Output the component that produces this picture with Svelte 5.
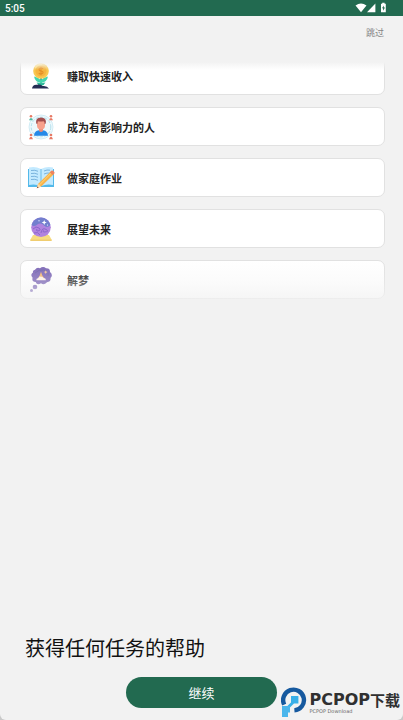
<script>
  const tasks = [
    { icon: 'money', label: '赚取快速收入' },
    { icon: 'influencer', label: '成为有影响力的人' },
    { icon: 'homework', label: '做家庭作业' },
    { icon: 'crystal', label: '展望未来' },
    { icon: 'dream', label: '解梦' }
  ];
</script>

<div class="screen">
  <header class="status">
    <span>5:05</span>
    <svg width="34" height="12" viewBox="0 0 34 12" fill="#fff" aria-hidden="true">
      <path d="M0.5 3.6Q6 -0.6 11.5 3.6L6 10.2Z" />
      <path d="M20.4 1.4V10.2H12Z" />
      <path fill-rule="evenodd" d="M26 1.8h1.2V.8h2.4v1h1.2v8.4H26ZM28.8 3.4 27 6.3h1.1v2.4L30 5.6h-1.2Z" />
    </svg>
  </header>

  <main>
    <div class="top"><button class="skip" type="button">跳过</button></div>

    <div class="viewport">
      <ul>
        {#each tasks as task}
          <li>
            <svg class="icon" width="28" height="28" viewBox="0 0 28 28" aria-hidden="true">
              {#if task.icon === 'money'}
                <path d="M14 16v9" stroke="#1aa58a" stroke-width="1.6" />
                <path d="M14 21Q8 20 7 14.5Q12 15.5 14 18.5Q16 15.5 21 14.5Q20 20 14 21Z" fill="#45d6ae" />
                <path d="M14 23.8Q10.5 23 9.6 20.4Q13 20.3 14 22Q15 20.3 18.4 20.4Q17.5 23 14 23.8Z" fill="#28b998" />
                <path d="M5 26.6Q5.5 22.4 10 22.8Q13 22 15.5 24Q20 23.4 22 26.6Z" fill="#242d54" />
                <circle cx="14" cy="9" r="7.8" fill="#f8c851" />
                <circle cx="14" cy="9" r="5.6" fill="#f5b53f" />
                <path d="M8.2 6.2A6.6 6.6 0 0 1 15 2.5" fill="none" stroke="#ffdc75" stroke-width="1.6" />
                <path d="M16.2 6.7Q14 5.2 12.3 6.7Q11.5 8.5 14 9Q16.8 9.5 15.8 11.2Q14 12.8 11.8 11.2M14 4.8v8.4" fill="none" stroke="#e58f27" stroke-width="1.1" />
              {:else if task.icon === 'influencer'}
                <circle cx="14" cy="14" r="12" fill="#edf8fc" stroke="#c9e9f2" stroke-width=".8" />
                <circle cx="14" cy="14" r="9.8" fill="none" stroke="#a5d9e9" stroke-width=".8" stroke-dasharray="3 1.5" />
                <g fill="#e77964">
                  <circle cx="4" cy="3.2" r="1.3" /><circle cx="24" cy="3.2" r="1.3" />
                  <circle cx="4" cy="22" r="1.3" /><circle cx="24" cy="22" r="1.3" />
                  <path d="M22 7.2Q24 2.6 26 7.2ZM2 26.2Q4 21.4 6 26.2ZM22 26.2Q24 21.4 26 26.2Z" />
                </g>
                <path d="M2 7.2Q4 2.6 6 7.2Z" fill="#50b9a0" />
                <path d="M7 22.7Q7.2 18 12 17.3H16Q20.8 18 21 22.7Z" fill="#2389e8" />
                <path d="M12 14h4v4q-2 2-4 0Z" fill="#e98b79" />
                <rect x="10" y="6.5" width="8" height="10" rx="4" fill="#f7a18d" />
                <path d="M9.2 10.5Q8.2 4.4 14 4.4T18.8 10.5L17.6 11Q17.7 8.8 16.6 8.2Q13 9 10.9 8.2L10.3 11Z" fill="#a34e4e" />
              {:else if task.icon === 'homework'}
                <path d="M1 5h26v18H1Z" fill="#53b9ea" />
                <path d="M2 3.5Q8 1.8 14 5Q20 1.8 26 3.5V21Q20 19.6 14 22Q8 19.6 2 21Z" fill="#c3eaff" />
                <path d="M14 5v17" stroke="#6dbbe6" />
                <path d="M4 6.5q4-.8 7 .8M4 9.5q4-.8 7 .8M4 12.5q4-.8 7 .8M4 15.5q4-.8 7 .8M17 7q3-1.5 6-.8M17 10q3-1.5 6-.8" fill="none" stroke="#71add9" stroke-width=".9" />
                <path d="M23.7 7.5 26.8 10.2 14.2 22.6 9.8 24.3 11 20Z" fill="#f8b34b" />
                <path d="M24.8 8.5 12.4 21" stroke="#ffd979" stroke-width="1" />
                <path d="M9.8 24.3 11 20 14.2 22.6Z" fill="#ffdcae" />
                <path d="M9.8 24.3 10.4 22.4 11.7 23.6Z" fill="#744946" />
                <path d="M22.7 8.5 24.3 6.8Q25.2 6 26.1 6.8L27.3 8Q28 9 27.1 9.8L25.8 11.1Z" fill="#ef835f" />
              {:else if task.icon === 'crystal'}
                <path d="M6 20h16l2.5 4.5V26h-21v-1.5Z" fill="#f8dc80" />
                <path d="M3.5 24.5h21V26h-21Z" fill="#f0cd70" />
                <circle cx="14" cy="12.3" r="9.8" fill="#b183df" />
                <path d="M4.5 10A9.8 9.8 0 0 1 23.5 10Q20 13.5 17 10.5Q14 7 10 9.7Q7 12 4.5 10Z" fill="#737fce" />
                <path d="M6 14Q9 10.5 12 13T10 16Q9 15 10 14M14 18Q15 12 19 14.4T17 17Q15.5 17 16.4 15.3M7 18Q11 16.3 13 20" fill="none" stroke="#8c66cb" stroke-width="1" />
                <path d="m17.2 5 .7 1.8 1.8.7-1.8.7-.7 1.8-.7-1.8-1.8-.7 1.8-.7Z" fill="#fff" />
                <circle cx="12" cy="5.8" r=".7" fill="#dce4ff" /><circle cx="20.5" cy="10" r=".6" fill="#fff" />
              {:else}
                <path d="M8 3.8Q10 .7 13 2.3Q16-.2 19 2.2Q23.2 2 23 6Q26.5 9 23.5 12Q24 16 20 16.2Q17 19.5 14 17.3Q10 19.8 8.7 16Q4.5 16 5.6 11.8Q2.8 8.5 6 6.5Q5.4 4.5 8 3.8Z" fill="#7862b4" />
                <path d="M8 7Q12 3 17 4T21 10" fill="none" stroke="#6a5fa6" />
                <path d="m14 5.7 1.4 4 2.4 3H11l1.6-3Z" fill="#f5b56c" />
                <path d="M9.3 14.3Q9 12.2 11.4 12Q12 10 14 10.8Q15.6 10.2 16.4 12Q19 12 18.8 14.3Z" fill="#fff2ea" />
                <path d="m18.7 4.3.6 1.3 1.4.5-1.4.6-.6 1.3-.6-1.3-1.3-.6 1.3-.5Z" fill="#f4c394" />
                <circle cx="8" cy="21" r="2.3" fill="#7862b4" />
                <circle cx="4.5" cy="24.6" r="1.5" fill="#7862b4" />
              {/if}
            </svg>
            <span>{task.label}</span>
          </li>
        {/each}
      </ul>
    </div>

    <h1>获得任何任务的帮助</h1>
    <button class="continue" type="button">继续</button>
  </main>

  <div class="brand">
    <svg width="27" height="31" viewBox="0 0 27 31" aria-hidden="true">
      <path d="M3.2 17.6A10.4 10.4 0 1 1 13.4 23.4" fill="none" stroke="#16599f" stroke-width="4.4" />
      <path d="M10 9h7.4v7.4H13L8.4 21H6.6v-2.2L10 15.4Z" fill="#38afe8" />
      <path d="M1 19h8v6.4H7V30H1Z" fill="#4bb6ec" />
    </svg>
    <div class="words">
      <div class="name"><span>PCPOP</span><span class="cn">下载</span></div>
      <small>PCPOP Download</small>
    </div>
  </div>
</div>

<style>
  :global(body) {
    margin: 0;
    background: #c9c9c9;
  }
  .screen {
    position: relative;
    display: flex;
    flex-direction: column;
    min-height: 100vh;
    font-family: Roboto, "Noto Sans CJK SC", sans-serif;
    color: #111;
  }
  .status {
    display: flex;
    align-items: center;
    justify-content: space-between;
    height: 16px;
    padding: 0 14px 0 5px;
    background: #226a50;
    color: #fff;
    font-size: 10px;
    font-weight: 500;
  }
  main {
    flex: 1;
    display: flex;
    flex-direction: column;
    padding-bottom: 12px;
    background: #f2f2f2;
    border-radius: 0 0 6px 6px;
  }
  button {
    border: 0;
    font-family: inherit;
    cursor: pointer;
  }
  .top {
    display: flex;
    justify-content: flex-end;
    height: 46px;
    padding: 8px 19px 0;
    box-sizing: border-box;
  }
  .skip {
    height: 18px;
    padding: 0;
    background: none;
    color: #858585;
    font-size: 9px;
    line-height: 18px;
  }
  .viewport {
    position: relative;
    height: 238px;
    padding: 0 18px 0 20px;
    overflow: hidden;
  }
  .viewport::before,
  .viewport::after {
    content: "";
    position: absolute;
    left: 0;
    right: 0;
    z-index: 1;
  }
  .viewport::before {
    top: 0;
    height: 8px;
    background: linear-gradient(#f2f2f2, #f2f2f200);
  }
  .viewport::after {
    bottom: 0;
    height: 40px;
    background: linear-gradient(#f2f2f200, #f2f2f240 50%, #f2f2f2c0);
  }
  ul {
    display: flex;
    flex-direction: column;
    gap: 12px;
    margin: -6px 0 0;
    padding: 0;
    list-style: none;
  }
  li {
    display: flex;
    align-items: center;
    gap: 12px;
    height: 39px;
    padding: 0 6px;
    box-sizing: border-box;
    border: 1px solid #e1e1e1;
    border-radius: 7px;
    background: #fff;
    color: #222;
    font-size: 11px;
    font-weight: 700;
  }
  h1 {
    margin: auto 25px 13px;
    font-size: 20px;
    font-weight: 400;
    line-height: 30px;
  }
  .continue {
    align-self: center;
    width: 151px;
    height: 31px;
    padding: 0;
    border-radius: 16px;
    background: #226a50;
    color: #fff;
    font-size: 13px;
  }
  .brand {
    position: absolute;
    right: 3px;
    bottom: 2px;
    display: flex;
    align-items: center;
    gap: 1px;
    color: #303030;
  }
  .brand svg {
    flex: none;
  }
  .name {
    display: flex;
    align-items: center;
    height: 17px;
    font-family: "DejaVu Sans", sans-serif;
    font-size: 16px;
    font-weight: 700;
  }
  .cn {
    font-family: "Noto Sans CJK SC", sans-serif;
    font-size: 15px;
  }
  small {
    display: block;
    font-family: "DejaVu Sans", sans-serif;
    font-size: 5px;
    line-height: 6px;
    color: #666;
  }
</style>
